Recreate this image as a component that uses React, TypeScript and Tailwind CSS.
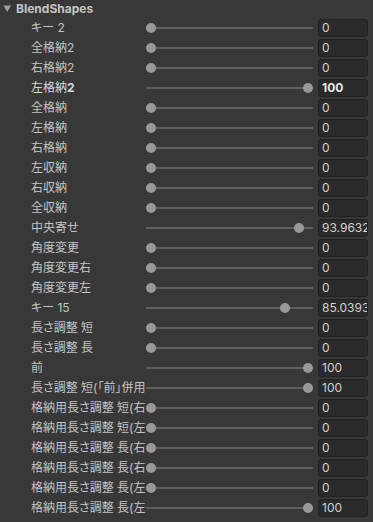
import React from "react";

const rows: { label: string; value: number; text: string; bold?: boolean }[] = [
  { label: "キー 2", value: 0, text: "0" },
  { label: "全格納2", value: 0, text: "0" },
  { label: "右格納2", value: 0, text: "0" },
  { label: "左格納2", value: 100, text: "100", bold: true },
  { label: "全格納", value: 0, text: "0" },
  { label: "左格納", value: 0, text: "0" },
  { label: "右格納", value: 0, text: "0" },
  { label: "左収納", value: 0, text: "0" },
  { label: "右収納", value: 0, text: "0" },
  { label: "全収納", value: 0, text: "0" },
  { label: "中央寄せ", value: 93.9632, text: "93.96325" },
  { label: "角度変更", value: 0, text: "0" },
  { label: "角度変更右", value: 0, text: "0" },
  { label: "角度変更左", value: 0, text: "0" },
  { label: "キー 15", value: 85.0393, text: "85.03937" },
  { label: "長さ調整 短", value: 0, text: "0" },
  { label: "長さ調整 長", value: 0, text: "0" },
  { label: "前", value: 100, text: "100" },
  { label: "長さ調整 短(「前」併用)", value: 100, text: "100" },
  { label: "格納用長さ調整 短(右)", value: 0, text: "0" },
  { label: "格納用長さ調整 短(左)", value: 0, text: "0" },
  { label: "格納用長さ調整 長(右)", value: 0, text: "0" },
  { label: "格納用長さ調整 長(右)", value: 0, text: "0" },
  { label: "格納用長さ調整 長(左)", value: 0, text: "0" },
  { label: "格納用長さ調整 長(左)", value: 100, text: "100" },
];

const font = { fontFamily: "Inter, 'Noto Sans CJK JP', sans-serif" };

export default function App() {
  return (
    <div
      className="w-[373px] h-[522px] bg-[#383838] overflow-hidden text-[12px] text-[#c4c4c4]"
      style={font}
    >
      <div className="h-[18px] flex items-center">
        <svg width="16" height="16" viewBox="0 0 16 16" className="shrink-0 -mt-[1px]">
          <path d="M3.5 4.5 L11 4.5 L7.25 11 Z" fill="#a0a0a0" />
        </svg>
        <span className="font-bold leading-[14px] -mt-[1px]">BlendShapes</span>
      </div>
      {rows.map((r, i) => (
        <div key={i} className="h-[20px] flex items-center">
          <div
            className={`ml-[31px] w-[115px] shrink-0 overflow-hidden whitespace-nowrap leading-[16px] [font-feature-settings:'palt'] ${
              r.bold ? "text-[#dadada]" : ""
            }`}
          >
            {r.bold ? (
              <>
                {r.label.slice(0, -1)}
                <span className="font-bold">{r.label.slice(-1)}</span>
              </>
            ) : (
              r.label
            )}
          </div>
          <div className="relative w-[167px] h-full shrink-0">
            <div className="absolute left-0 right-0 top-[9px] h-[2px] bg-[#5e5e5e]" />
            <div
              className="absolute top-[5px] w-[10px] h-[10px] rounded-full bg-[#999999]"
              style={{ left: `${(r.value / 100) * 157}px` }}
            />
          </div>
          <div className="ml-[5px] w-[50px] h-[18px] shrink-0 rounded-[3px] bg-[#2a2a2a] border border-[#212121] overflow-hidden flex items-center pl-[3px]">
            <span
              className={`whitespace-nowrap leading-[14px] ${
                r.bold ? "font-bold text-[#e6e6e6]" : "text-[#d2d2d2]"
              }`}
            >
              {r.text}
            </span>
          </div>
        </div>
      ))}
    </div>
  );
}
